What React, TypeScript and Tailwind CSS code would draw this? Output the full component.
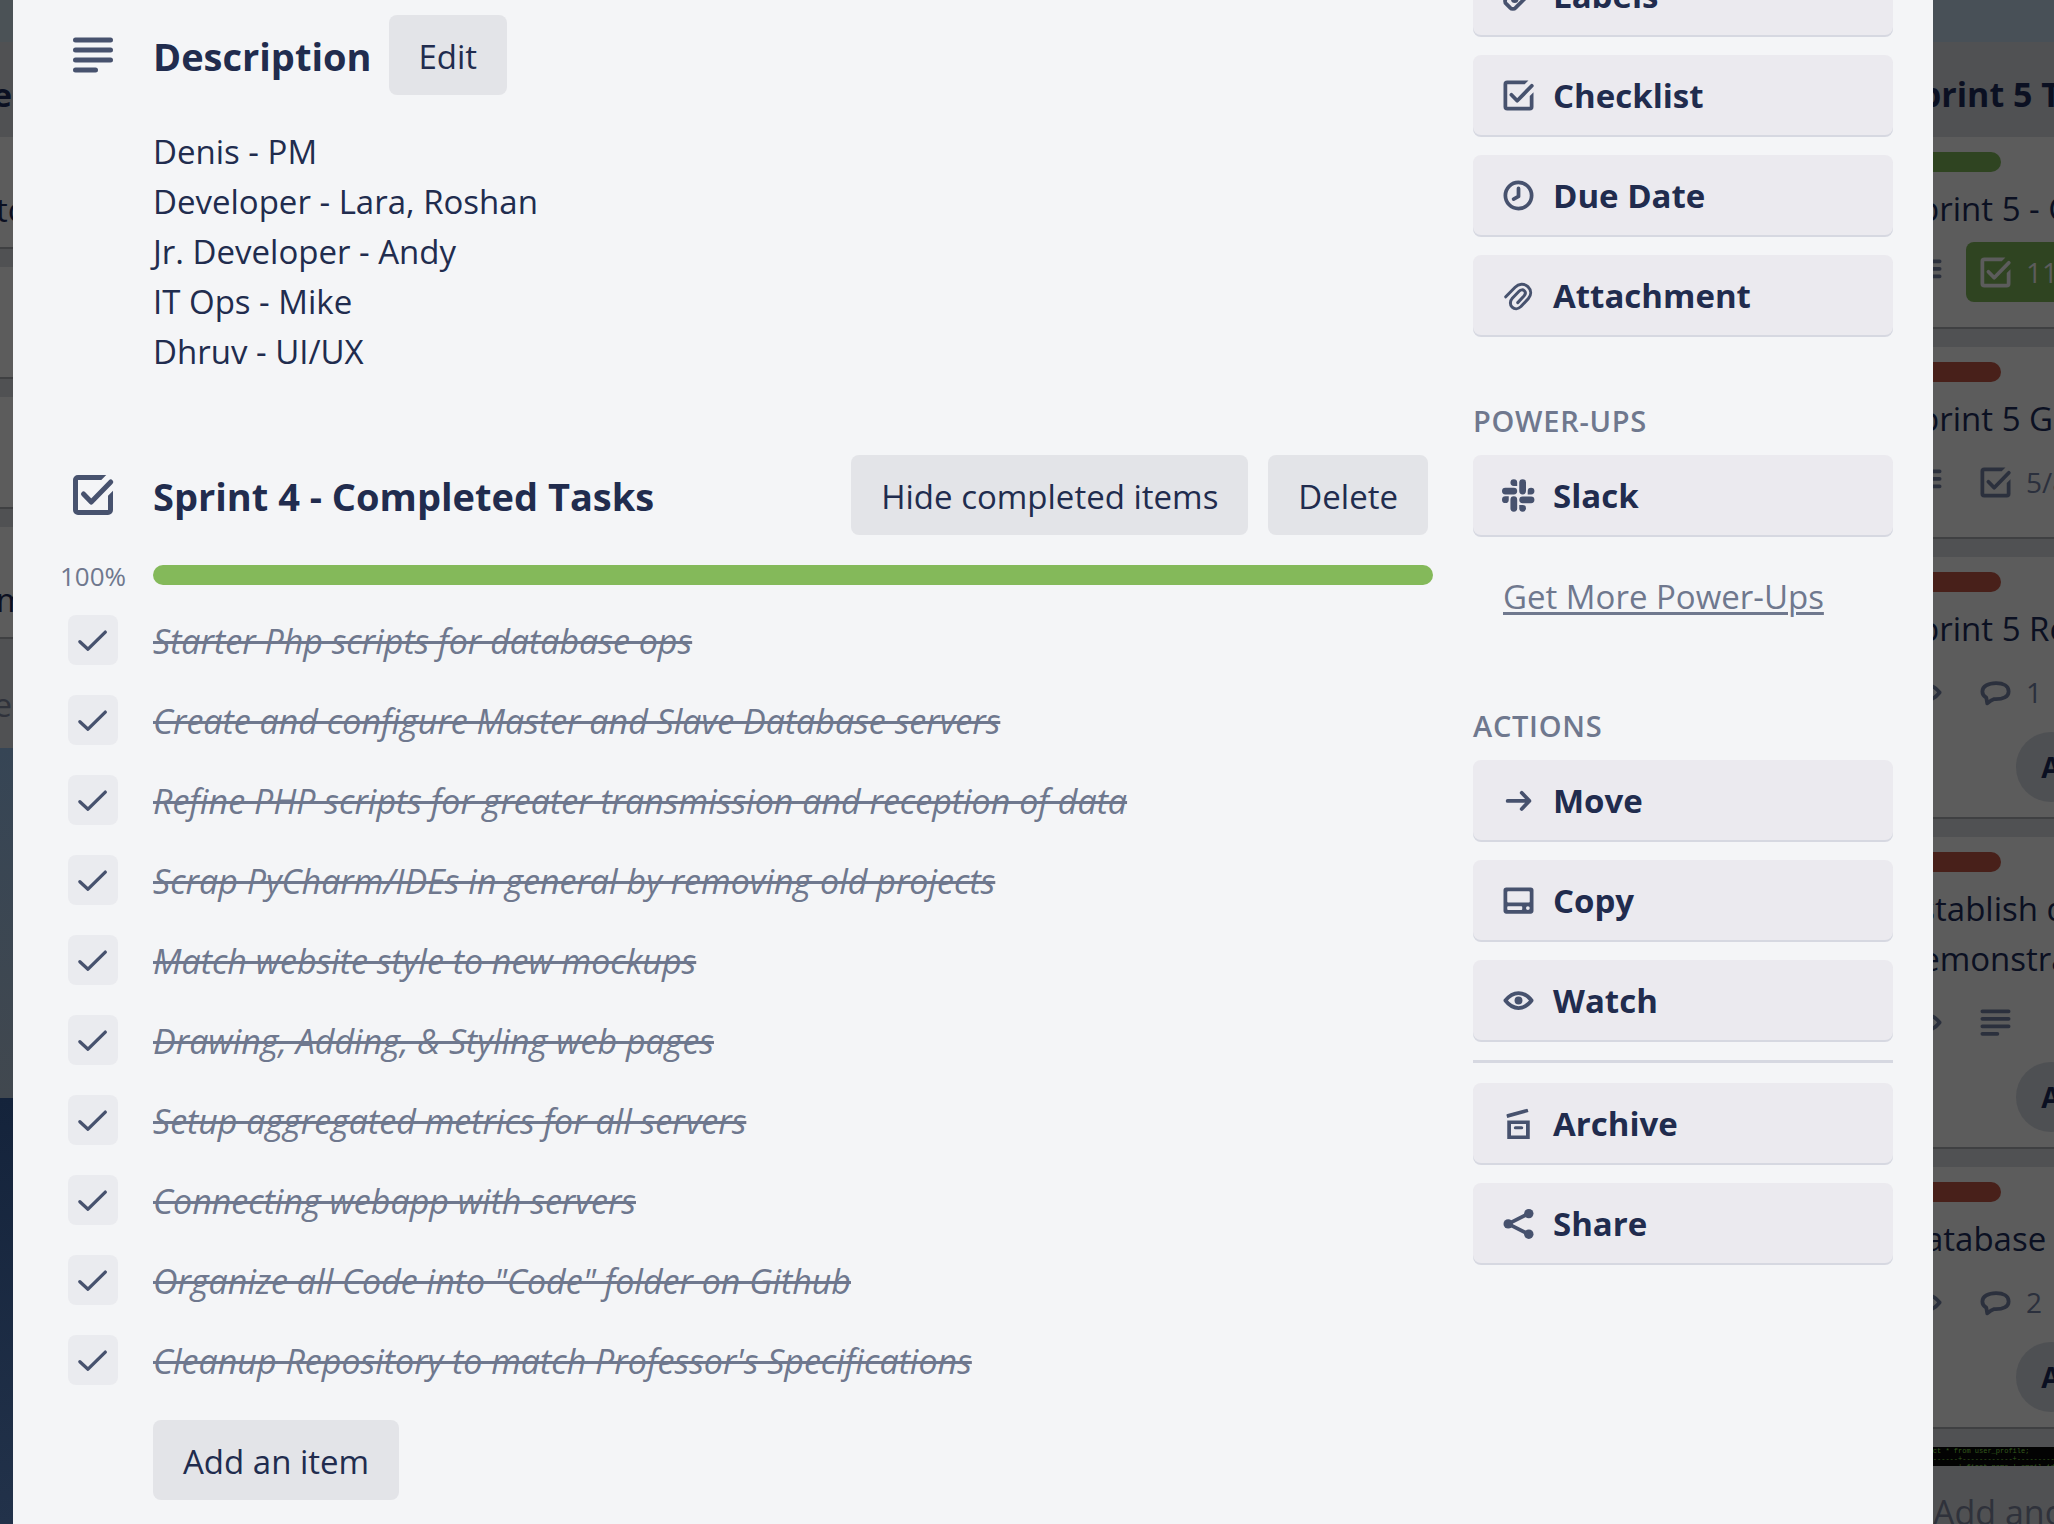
import React from 'react';

type IconProps = { className?: string };

const stroke = {
  fill: 'none',
  stroke: 'currentColor',
  strokeWidth: 2,
  strokeLinecap: 'round' as const,
  strokeLinejoin: 'round' as const,
};

function LinesIcon({ className }: IconProps) {
  return (
    <svg viewBox="0 0 24 24" className={className} aria-hidden="true" {...stroke}>
      <path d="M5 6h14M5 10h14M5 14h14M5 18h8" />
    </svg>
  );
}

function ChecklistIcon({ className }: IconProps) {
  return (
    <svg viewBox="0 0 24 24" className={className} aria-hidden="true" fill="currentColor">
      <path d="M6 4a2 2 0 0 0-2 2v12a2 2 0 0 0 2 2h12a2 2 0 0 0 2-2v-7.700l-2 2V18H6V6h9.300l2-2z" />
      <path d="M8.200 11.600 11.300 14.800 19.100 6.800" {...stroke} />
    </svg>
  );
}

function ClockIcon({ className }: IconProps) {
  return (
    <svg viewBox="0 0 24 24" className={className} aria-hidden="true" {...stroke}>
      <circle cx="12" cy="12" r="7" />
      <path d="M12 8.200v4.300l-2.600 1.400" />
    </svg>
  );
}

function ClipIcon({ className }: IconProps) {
  return (
    <svg viewBox="0 0 24 24" className={className} aria-hidden="true" {...stroke} strokeWidth={1.6}>
      <path d="M5.200 12.700 10.200 7.600C12.100 5.700 15 5.400 17 7.300s1.900 4.500.2 6.400l-3.900 4.200c-1.500 1.500-3.500 1.400-4.700.3s-1.300-3.200.1-4.700l3.600-3.800c.9-.9 2.100-.9 2.800-.2s.7 1.800-.2 2.800l-3.300 3.500" />
    </svg>
  );
}

function TagIcon({ className }: IconProps) {
  return (
    <svg viewBox="0 0 24 24" className={className} aria-hidden="true" {...stroke}>
      <path d="M5.500 13.500l8-8h5v5l-8 8a2 2 0 0 1-3 0l-2-2a2 2 0 0 1 0-3z" />
      <circle cx="10" cy="14" r="1" />
    </svg>
  );
}

function SlackIcon({ className }: IconProps) {
  return (
    <svg viewBox="0 0 24 24" className={className} aria-hidden="true" fill="currentColor">
      <path d="M6.800 14.200a1.800 1.800 0 1 1-1.800-1.800h1.800zM7.700 14.200a1.800 1.800 0 0 1 3.600 0v4.600a1.800 1.800 0 0 1-3.600 0zM9.500 6.900a1.800 1.800 0 1 1 1.800-1.800v1.800zM9.500 7.800a1.800 1.800 0 0 1 0 3.600H5a1.800 1.800 0 0 1 0-3.600zM16.900 9.600a1.800 1.800 0 1 1 1.800 1.800h-1.800zM16 9.600a1.800 1.800 0 0 1-3.600 0V5.100a1.800 1.800 0 0 1 3.600 0zM14.200 17a1.800 1.800 0 1 1-1.800 1.800V17zM14.200 16.100a1.800 1.800 0 0 1 0-3.600h4.500a1.800 1.800 0 0 1 0 3.600z" />
    </svg>
  );
}

function ArrowIcon({ className }: IconProps) {
  return (
    <svg viewBox="0 0 24 24" className={className} aria-hidden="true" {...stroke}>
      <path d="M6.200 12.200h11.600M13.700 7.900l4.100 4.300-4.100 4.300" />
    </svg>
  );
}

function CopyIcon({ className }: IconProps) {
  return (
    <svg viewBox="0 0 24 24" className={className} aria-hidden="true" fill="currentColor" fillRule="evenodd">
      <path d="M5.500 5h13A1.500 1.500 0 0 1 20 6.500v11a1.500 1.500 0 0 1-1.500 1.500h-13A1.500 1.500 0 0 1 4 17.500v-11A1.500 1.500 0 0 1 5.500 5zM6.500 7a.5.5 0 0 0-.5.5v5a.5.5 0 0 0 .5.500h11a.5.5 0 0 0 .5-.5v-5a.5.5 0 0 0-.5-.5zM6.500 15a.5.5 0 0 0-.5.500v1a.5.500 0 0 0 .5.500h7a.5.500 0 0 0 .5-.5v-1a.5.500 0 0 0-.5-.5zM17 15a1 1 0 1 0 0 2 1 1 0 0 0 0-2z" />
    </svg>
  );
}

function EyeIcon({ className }: IconProps) {
  return (
    <svg viewBox="0 0 24 24" className={className} aria-hidden="true" {...stroke}>
      <path d="M5 12c2.100-2.700 4.400-4 7-4s4.900 1.300 7 4c-2.100 2.700-4.400 4-7 4s-4.900-1.300-7-4z" />
      <circle cx="12" cy="12" r="2.100" fill="currentColor" stroke="none" />
    </svg>
  );
}

function ArchiveIcon({ className }: IconProps) {
  return (
    <svg viewBox="0 0 24 24" className={className} aria-hidden="true" fill="currentColor" fillRule="evenodd">
      <path d="M6 10.400h12V20.200H6zM8 12.200V18.400h8v-6.200z" />
      <path d="M10.300 14.200h3.400" {...stroke} strokeWidth={1.6} />
      <path d="M5.600 7.600a.6.6 0 0 1 .5-.7L16.300 4.200a.6.600 0 0 1 .7.400l.3 1.300L6 9z" />
    </svg>
  );
}

function ShareIcon({ className }: IconProps) {
  return (
    <svg viewBox="0 0 24 24" className={className} aria-hidden="true" fill="currentColor">
      <circle cx="6.500" cy="12.200" r="2.500" />
      <circle cx="17.500" cy="6.700" r="2.500" />
      <circle cx="17.500" cy="17.700" r="2.500" />
      <path d="M17.500 6.700 6.500 12.200l11 5.500" {...stroke} />
    </svg>
  );
}

function CommentIcon({ className }: IconProps) {
  return (
    <svg viewBox="0 0 24 24" className={className} aria-hidden="true" {...stroke}>
      <path d="M12.300 7C8 7 5 8.700 5 11.500c0 1.500.8 2.600 2.100 3.300l.5 3c1.200-1 2.300-1.800 3.700-2.300 4.800.200 7.700-1.300 7.700-4.100C19 8.600 16.300 7 12.300 7z" />
    </svg>
  );
}

function SideButton({ icon: Icon, label }: { icon: React.FC<IconProps>; label: string }) {
  return (
    <button
      type="button"
      className="mb-5 flex h-20 w-full items-center gap-3 rounded-lg bg-[#ebeaef] pl-[23px] text-left text-[33px] font-bold text-[#212c4e] shadow-[0_2px_0_#d6d8e1]"
    >
      <Icon className="size-[45px] shrink-0 text-[#47526e]" />
      <span className="pt-[2px]">{label}</span>
    </button>
  );
}

function SideHeading({ children }: { children: React.ReactNode }) {
  return (
    <h3 className="mb-[9px] text-[29px] leading-[50px] font-semibold tracking-wide text-[#6f788e] uppercase">{children}</h3>
  );
}

function GreyButton({ children }: { children: React.ReactNode }) {
  return (
    <button
      type="button"
      className="h-20 shrink-0 rounded-lg bg-[#e3e4e8] px-[30px] pt-[3px] text-[33px] whitespace-nowrap text-[#212c4e]"
    >
      {children}
    </button>
  );
}

const team = ['Denis - PM', 'Developer - Lara, Roshan', 'Jr. Developer - Andy', 'IT Ops - Mike', 'Dhruv - UI/UX'];

const tasks = [
  'Starter Php scripts for database ops',
  'Create and configure Master and Slave Database servers',
  'Refine PHP scripts for greater transmission and reception of data',
  'Scrap PyCharm/IDEs in general by removing old projects',
  'Match website style to new mockups',
  'Drawing, Adding, & Styling web pages',
  'Setup aggregated metrics for all servers',
  'Connecting webapp with servers',
  'Organize all Code into "Code" folder on Github',
  "Cleanup Repository to match Professor's Specifications",
];

function TaskRow({ text }: { text: string }) {
  return (
    <li>
      <label className="flex h-20 items-start">
        <span className="ml-[55px] grid size-[50px] shrink-0 place-items-center">
          <input
            type="checkbox"
            defaultChecked
            className="col-start-1 row-start-1 size-[50px] appearance-none rounded-lg bg-[#eaebef]"
          />
          <svg
            viewBox="0 0 24 24"
            className="pointer-events-none col-start-1 row-start-1 size-[50px] text-[#47526e]"
            aria-hidden="true"
            {...stroke}
            strokeWidth={1.6}
          >
            <path d="M5.700 12.800l3.900 3.600 8.300-8.200" />
          </svg>
        </span>
        <span className="ml-[35px] text-[34px] leading-[53px] whitespace-nowrap text-[#6f788e] italic line-through decoration-[3px]">
          {text}
        </span>
      </label>
    </li>
  );
}

function BoardCard({
  color,
  title,
  children,
  avatar,
}: {
  color: string;
  title: string[];
  children: React.ReactNode;
  avatar?: boolean;
}) {
  return (
    <article className="mb-5 bg-[#5c5c5c] pt-[15px] pb-[15px] shadow-[0_2px_0_#3f4042]">
      <div className={`h-5 w-[100px] rounded-full ${color}`} />
      <h3 className="mt-3 mb-2 text-[33px] leading-[50px] whitespace-nowrap text-[#0b1022]">
        {title.map((line) => (
          <span key={line} className="block">
            {line}
          </span>
        ))}
      </h3>
      <div className="flex h-[60px] items-center pl-[3px]">{children}</div>
      {avatar ? (
        <div className="mt-[10px] ml-[115px] flex size-[70px] items-center justify-center rounded-full bg-[#4e5053] text-[28px] font-bold text-[#0b1022]">
          A
        </div>
      ) : (
        <div className="h-[10px]" />
      )}
    </article>
  );
}

function CardStat({ icon: Icon, text }: { icon: React.FC<IconProps>; text?: string }) {
  return (
    <div className="ml-6 flex items-center gap-2 text-[28px] text-[#2b303d]">
      <Icon className="size-[45px] shrink-0" />
      {text}
    </div>
  );
}

function LeftBoard() {
  return (
    <div className="w-[13px] overflow-hidden bg-[#14233b]">
      <div className="h-[42px] bg-[#4b5256]" />
      <div className="h-[706px] bg-[#505153] text-[33px] leading-[50px] text-[#0b1022]">
        <div className="flex h-[95px] w-3 justify-end pt-[28px] font-bold">e</div>
        <div className="mb-5 h-[110px] bg-[#5c5c5c] pt-[48px] -indent-1 whitespace-nowrap shadow-[0_2px_0_#3f4042]">to</div>
        <div className="mb-5 h-[110px] bg-[#5c5c5c] shadow-[0_2px_0_#3f4042]" />
        <div className="mb-5 h-[110px] bg-[#5c5c5c] shadow-[0_2px_0_#3f4042]" />
        <div className="h-[110px] bg-[#5c5c5c] pt-[48px] -indent-1 shadow-[0_2px_0_#3f4042]">m</div>
        <div className="flex w-3 justify-end pt-[43px] text-[#2f323b]">e</div>
      </div>
      <div className="h-[350px] bg-linear-to-b from-[#364555] to-[#41484f]" />
      <div className="h-[426px] bg-linear-to-b from-[#14233b] to-[#22324a]" />
    </div>
  );
}

function RightBoard() {
  return (
    <div className="w-[121px] overflow-hidden bg-[#485057]">
      <div className="mt-[42px] -ml-[32px] w-[640px] bg-[#505153]">
        <h2 className="h-[95px] pt-[27px] text-[34px] leading-[50px] font-bold whitespace-nowrap text-[#0b1022]">
          Sprint 5 Tasks
        </h2>
        <BoardCard color="bg-[#2f4421]" title={['Sprint 5 - Completed']}>
          <LinesIcon className="size-[45px] text-[#2b303d]" />
          <div className="ml-[17px] flex h-[60px] items-center gap-2 rounded-lg bg-[#2f4421] px-[7px] text-[28px] text-[#5c5c5c]">
            <ChecklistIcon className="size-[45px]" />
            11/11
          </div>
        </BoardCard>
        <BoardCard color="bg-[#48201a]" title={['Sprint 5 Goals']}>
          <LinesIcon className="size-[45px] text-[#2b303d]" />
          <CardStat icon={ChecklistIcon} text="5/8" />
        </BoardCard>
        <BoardCard color="bg-[#48201a]" title={['Sprint 5 Review']} avatar>
          <EyeIcon className="size-[45px] text-[#2b303d]" />
          <CardStat icon={CommentIcon} text="1" />
        </BoardCard>
        <BoardCard color="bg-[#48201a]" title={['Establish database', 'demonstration']} avatar>
          <EyeIcon className="size-[45px] text-[#2b303d]" />
          <CardStat icon={LinesIcon} />
        </BoardCard>
        <BoardCard color="bg-[#48201a]" title={['Database']} avatar>
          <EyeIcon className="size-[45px] text-[#2b303d]" />
          <CardStat icon={CommentIcon} text="2" />
        </BoardCard>
        <pre className="h-[19px] overflow-hidden bg-[#030303] pl-[15px] font-['Liberation_Mono',monospace] text-[7px] leading-[8px] text-[#345a1d]">
          {'select * from user_profile;\n+---------+------------+------------+\n| id      | first_name | email_id   |'}
        </pre>
        <div className="pt-[21px] pl-[32px] text-[34px] leading-[50px] whitespace-nowrap text-[#2f323b]">
          Add another card
        </div>
      </div>
    </div>
  );
}

export default function App() {
  return (
    <div className="relative min-h-screen overflow-hidden font-['Open_Sans','Noto_Sans',sans-serif]">
      <div aria-hidden="true" className="absolute inset-0 flex justify-between overflow-hidden">
        <LeftBoard />
        <RightBoard />
      </div>
      <main className="relative mr-[121px] ml-[13px] flex min-h-screen items-start bg-[#f4f5f7]">
        <div className="min-w-0 flex-1 pt-[15px]">
          <header className="flex h-20 items-center">
            <LinesIcon className="mr-[30px] ml-[50px] size-[60px] text-[#47526e]" />
            <h2 className="mr-[17px] pt-[2px] text-[38px] font-bold text-[#212c4e]">Description</h2>
            <GreyButton>Edit</GreyButton>
          </header>
          <div className="mt-[32px] ml-[140px] text-[33px] leading-[50px] text-[#212c4e]">
            {team.map((m) => (
              <p key={m}>{m}</p>
            ))}
          </div>
          <section className="mt-[78px]">
            <header className="flex h-20 items-center gap-5 pr-[5px]">
              <div className="flex flex-1 items-center">
                <ChecklistIcon className="mr-[30px] ml-[50px] size-[60px] text-[#47526e]" />
                <h2 className="pt-[2px] text-[38px] font-bold whitespace-nowrap text-[#212c4e]">Sprint 4 - Completed Tasks</h2>
              </div>
              <GreyButton>Hide completed items</GreyButton>
              <GreyButton>Delete</GreyButton>
            </header>
            <div className="my-[30px] flex h-5 items-center">
              <span className="w-[140px] pt-[2px] pl-[47px] text-[26px] text-[#6f788e]">100%</span>
              <div
                role="progressbar"
                aria-label="Sprint 4 - Completed Tasks"
                aria-valuenow={100}
                aria-valuemin={0}
                aria-valuemax={100}
                className="h-5 flex-1 rounded-[10px] bg-[#84b95a]"
              />
            </div>
            <ul>
              {tasks.map((t) => (
                <TaskRow key={t} text={t} />
              ))}
            </ul>
            <div className="mt-[5px] ml-[140px]">
              <GreyButton>Add an item</GreyButton>
            </div>
          </section>
        </div>
        <aside className="-mt-[45px] mr-[40px] ml-[40px] w-[420px] shrink-0">
          <SideButton icon={TagIcon} label="Labels" />
          <SideButton icon={ChecklistIcon} label="Checklist" />
          <SideButton icon={ClockIcon} label="Due Date" />
          <SideButton icon={ClipIcon} label="Attachment" />
          <div className="mt-[61px]">
            <SideHeading>Power-Ups</SideHeading>
            <SideButton icon={SlackIcon} label="Slack" />
            <a
              href="#power-ups"
              className="mt-[37px] ml-[30px] block text-[33px] leading-[50px] text-[#6f788e] underline decoration-[3px] underline-offset-[3px]"
            >
              Get More Power-Ups
            </a>
          </div>
          <div className="mt-[79px]">
            <SideHeading>Actions</SideHeading>
            <SideButton icon={ArrowIcon} label="Move" />
            <SideButton icon={CopyIcon} label="Copy" />
            <SideButton icon={EyeIcon} label="Watch" />
            <hr className="mb-5 border-t-[3px] border-[#d6d8e1]" />
            <SideButton icon={ArchiveIcon} label="Archive" />
            <SideButton icon={ShareIcon} label="Share" />
          </div>
        </aside>
      </main>
    </div>
  );
}
